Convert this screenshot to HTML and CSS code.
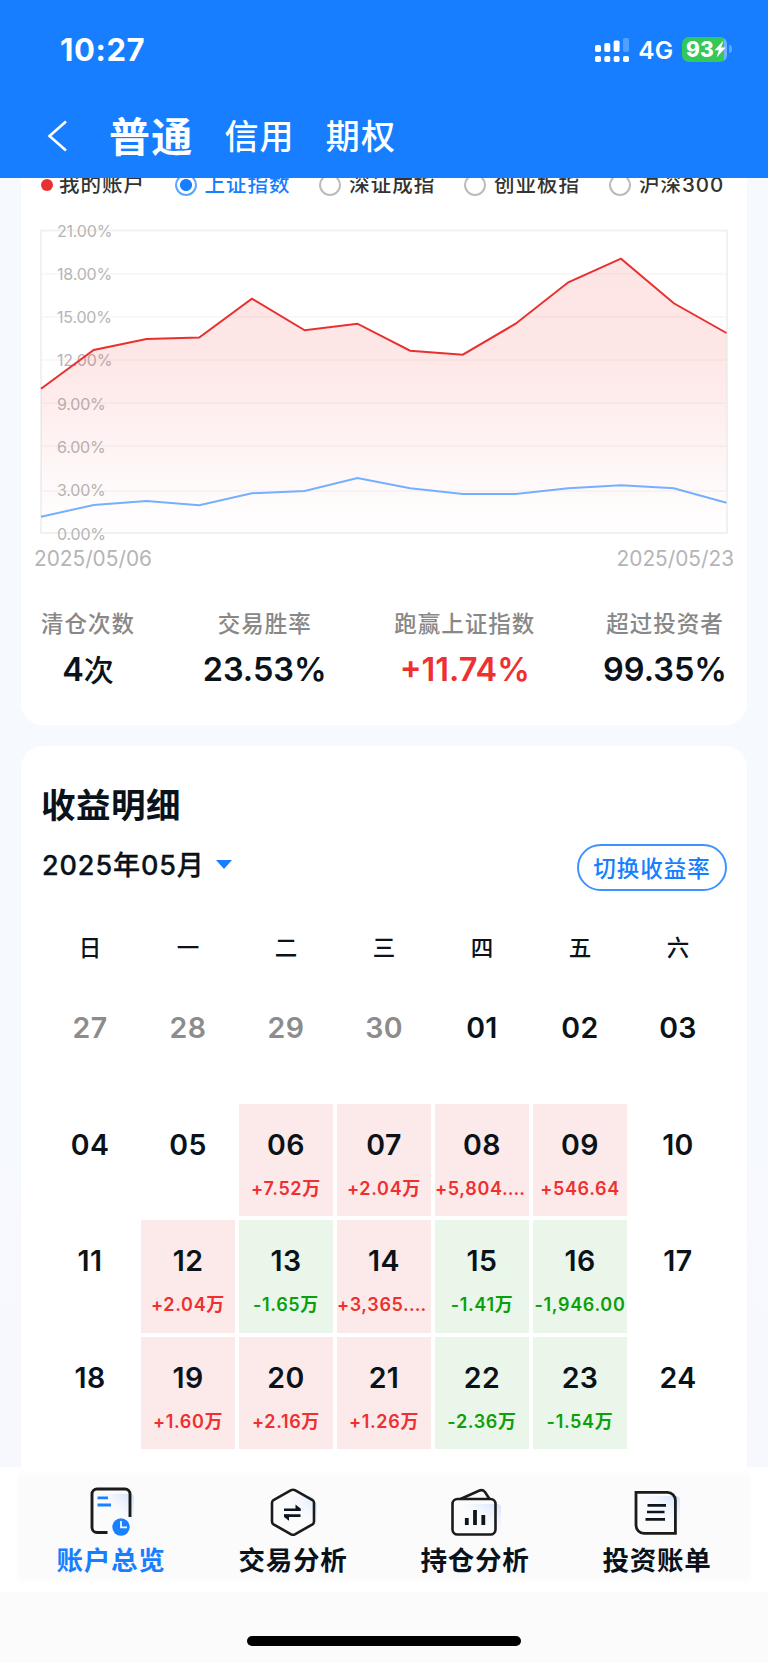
FILE: index.html
```html
<!DOCTYPE html>
<html lang="zh-CN">
<head>
  <meta charset="UTF-8" />
  <title>账户总览</title>
  <link rel="stylesheet" href="styles.css">
</head>
<body>

  <header class="header">
    <div class="status-bar">
      <span class="time">10:27</span>
      <div class="status-icons">
        <svg class="signal" width="34" height="25" viewBox="0 0 34 25" fill="#fff">
          <rect x="0" y="8" width="6" height="7" rx="1.8" />
          <rect x="9.3" y="6" width="6" height="9" rx="1.8" />
          <rect x="18.6" y="3.5" width="6" height="11.5" rx="1.8" />
          <rect x="28" y="1" width="6" height="14" rx="1.8" opacity="0.25" />
          <rect x="0" y="19" width="6" height="6" rx="1.8" />
          <rect x="9.3" y="19" width="6" height="6" rx="1.8" />
          <rect x="18.6" y="19" width="6" height="6" rx="1.8" />
          <rect x="28" y="19" width="6" height="6" rx="1.8" />
        </svg>
        <span class="network">4G</span>
        <div class="battery">
          <span>93</span>
          <svg width="12" height="18" viewBox="0 0 12 18"><path d="M9.5 0.5L0.5 10.2H4.8L2.6 17.5L11.7 7.4H7.2Z" fill="#fff" /></svg>
        </div>
        <i class="battery-cap"></i>
      </div>
    </div>
    <nav class="nav">
      <svg class="back" width="22" height="34" viewBox="0 0 22 34"><path d="M19 2.5L2.5 17L19 31.5" fill="none" stroke="#fff" stroke-width="2.6" /></svg>
      <a class="nav-item active">普通</a>
      <a class="nav-item">信用</a>
      <a class="nav-item">期权</a>
    </nav>
  </header>

  <main class="content">
    <section class="card card-chart">
      <div class="legend">
        <span class="legend-item mine"><i class="dot"></i>我的账户</span>
        <span class="legend-item checked"><i class="radio"></i>上证指数</span>
        <span class="legend-item"><i class="radio"></i>深证成指</span>
        <span class="legend-item"><i class="radio"></i>创业板指</span>
        <span class="legend-item"><i class="radio"></i>沪深300</span>
      </div>

      <svg class="chart" width="688" height="316" viewBox="0 0 688 316">
        <defs>
          <linearGradient id="area" gradientUnits="userSpaceOnUse" x1="0" y1="34" x2="0" y2="309">
            <stop offset="0" stop-color="#f53030" stop-opacity="0.125" />
            <stop offset="0.35" stop-color="#f53030" stop-opacity="0.12" />
            <stop offset="0.85" stop-color="#f53030" stop-opacity="0.025" />
            <stop offset="1" stop-color="#f53030" stop-opacity="0" />
          </linearGradient>
        </defs>
        <g id="grid"></g>
        <path id="fill" fill="url(#area)" />
        <path id="mineLine" class="line line-mine" />
        <path id="indexLine" class="line line-index" />
      </svg>

      <div class="dates"><span>2025/05/06</span><span>2025/05/23</span></div>

      <div class="stats">
        <div class="stat"><p>清仓次数</p><b>4<em>次</em></b></div>
        <div class="stat"><p>交易胜率</p><b>23.53%</b></div>
        <div class="stat"><p>跑赢上证指数</p><b class="up">+11.74%</b></div>
        <div class="stat"><p>超过投资者</p><b>99.35%</b></div>
      </div>
    </section>

    <section class="card card-detail">
      <h2>收益明细</h2>
      <div class="toolbar">
        <div class="month">2025年05月<i class="caret"></i></div>
        <button class="btn-switch">切换收益率</button>
      </div>
      <div class="week">
        <span>日</span><span>一</span><span>二</span><span>三</span><span>四</span><span>五</span><span>六</span>
      </div>
      <div class="calendar" id="calendar"></div>
    </section>
  </main>

  <footer class="tabbar">
    <div class="tabs">
      <a class="tab active">
        <svg width="52" height="52" viewBox="0 0 52 52" fill="none">
          <defs>
            <linearGradient id="tint" x1="0" y1="1" x2="1" y2="0">
              <stop offset="0.3" stop-color="#fff" stop-opacity="0" />
              <stop offset="1" stop-color="#cfe0ff" />
            </linearGradient>
          </defs>
          <rect x="12" y="8" width="37" height="32" rx="4" fill="url(#tint)" />
          <path d="M22.5 46.5H12a5 5 0 0 1-5-5V8a5 5 0 0 1 5-5H40a5 5 0 0 1 5 5V31" stroke="#1b1b1b" stroke-width="2.9" />
          <path d="M12.5 11.9H23M12.5 19H26" stroke="#1a80ff" stroke-width="2.8" />
          <circle cx="36" cy="41" r="8.7" fill="#1a80ff" />
          <path d="M36 35V41.4H42" stroke="#fff" stroke-width="1.7" />
        </svg>
        <span>账户总览</span>
      </a>
      <a class="tab">
        <svg width="52" height="52" viewBox="0 0 52 52" fill="none">
          <path d="M24 12L44 10L50 18V38L30 44Z" fill="url(#tint)" />
          <path d="M24.1 4.2Q26 3.2 27.9 4.2L45.5 14Q47 15 47 16.8V35.6Q47 37.4 45.5 38.3L27.9 48.3Q26 49.2 24.1 48.3L6.5 38.3Q5 37.4 5 35.6V16.8Q5 15 6.5 14Z" stroke="#1b1b1b" stroke-width="2.6" />
          <path d="M17 23.8H33.5M17 29.6H33.5" stroke="#0d1620" stroke-width="2.6" />
          <path d="M28.5 18.6L33.5 22.5V25H28.5ZM22 34.8L17 31V28.5H22Z" fill="#0d1620" />
        </svg>
        <span>交易分析</span>
      </a>
      <a class="tab">
        <svg width="52" height="52" viewBox="0 0 52 52" fill="none">
          <rect x="12" y="18" width="40" height="27" rx="4" fill="url(#tint)" />
          <rect x="3.5" y="13" width="43" height="35.5" rx="5" stroke="#1b1b1b" stroke-width="2.6" />
          <path d="M11.5 13L30 4.7Q33.5 3.2 36 6L40.5 13" stroke="#1b1b1b" stroke-width="2.6" />
          <path d="M17.8 32V39M26 24V39M34.3 29V39" stroke="#0d1620" stroke-width="3.8" />
        </svg>
        <span>持仓分析</span>
      </a>
      <a class="tab">
        <svg width="52" height="52" viewBox="0 0 52 52" fill="none">
          <rect x="12" y="10" width="37" height="32" rx="4" fill="url(#tint)" />
          <path d="M5 6.3H36.4a8 8 0 0 1 8 8V47.3H13a8 8 0 0 1-8-8Z" stroke="#1b1b1b" stroke-width="2.8" />
          <path d="M16.5 19.3H35M16 26H33.5M14.5 33.3H34" stroke="#0d1620" stroke-width="2.7" />
        </svg>
        <span>投资账单</span>
      </a>
    </div>
  </footer>
  <div class="home"><i></i></div>

  <script>
    // y positions of the axis lines and both series, in chart pixels
    const gridLines = [[6.5, '21.00%'], [50, '18.00%'], [93, '15.00%'], [136, '12.00%'], [179, '9.00%'], [222, '6.00%'], [267, '3.00%'], [309, '0.00%']];
    const mine = [164.7, 126, 115, 113.5, 74.7, 106.3, 99.7, 126.7, 130.7, 99.7, 58.3, 34.7, 79.3, 109];
    const index = [292.7, 281, 277, 281.3, 269.3, 267, 254, 264.3, 270, 270, 264.3, 261.3, 264.3, 278.7];

    let html = '';
    gridLines.forEach(([y, label], i) => {
      if (i > 0 && i < 7) html += `<path class="grid-line" d="M1 ${y}H686" />`;
    });
    html += '<rect class="grid-frame" x="1" y="6.5" width="686" height="302.5" />';
    gridLines.forEach(([y, label], i) => {
      html += `<text x="17" y="${6.5 + i * 43.3 + 6}">${label}</text>`;
    });
    document.getElementById('grid').innerHTML = html;

    const toPath = (arr) => 'M' + arr.map((y, i) => `${(1 + i * 685.5 / 13).toFixed(1)} ${y}`).join('L');
    document.getElementById('mineLine').setAttribute('d', toPath(mine));
    document.getElementById('indexLine').setAttribute('d', toPath(index));
    document.getElementById('fill').setAttribute('d', toPath(mine) + 'V309H1Z');

    const profits = {
      '06': '+7.52万', '07': '+2.04万', '08': '+5,804.00', '09': '+546.64',
      '12': '+2.04万', '13': '-1.65万', '14': '+3,365.00', '15': '-1.41万', '16': '-1,946.00',
      '19': '+1.60万', '20': '+2.16万', '21': '+1.26万', '22': '-2.36万', '23': '-1.54万'
    };
    const calendar = document.getElementById('calendar');

    // 27 - 30 belong to April
    for (let i = -3; i <= 24; i++) {
      const day = String(i <= 0 ? 30 + i : i).padStart(2, '0');
      const profit = i > 0 ? profits[day] : '';
      const cell = document.createElement('div');
      cell.classList.add('cell');
      if (i <= 0) cell.classList.add('other');
      if (profit) cell.classList.add(profit[0] === '+' ? 'gain' : 'loss');
      cell.innerHTML = `<b>${day}</b>` + (profit ? `<span>${profit}</span>` : '');
      calendar.appendChild(cell);
    }
  </script>
</body>
</html>
```
FILE: styles.css
```css
* {
  box-sizing: border-box;
}

body {
  margin: 0;
  width: 768px;
  height: 1663px;
  display: flex;
  flex-direction: column;
  overflow: hidden;
  font-family: Inter, "Noto Sans CJK SC", sans-serif;
  color: #0a121a;
  background: #fff;
}

i,
em {
  font-style: normal;
}

/* Header */
.header {
  flex: none;
  height: 178px;
  background: #177fff;
  color: #fff;
}

.status-bar {
  height: 98px;
  padding: 0 36px 0 60px;
  display: flex;
  justify-content: space-between;
  align-items: center;
}

.time {
  font-size: 31px;
  font-weight: 700;
  letter-spacing: 0.6px;
}

.status-icons {
  display: flex;
  align-items: center;
}

.network {
  margin: 2px 9px 0 9px;
  font-size: 24.5px;
  font-weight: 600;
}

.battery {
  width: 45px;
  height: 25px;
  border-radius: 7px;
  background: linear-gradient(90deg, #34c759 42px, #74b3ff 42px);
  display: flex;
  align-items: center;
  padding-left: 4px;
  font-size: 21px;
  font-weight: 800;
}

.battery-cap {
  width: 3px;
  height: 8px;
  margin-left: 2px;
  border-radius: 0 4px 4px 0;
  background: #5ba5ff;
}

.nav {
  height: 76px;
  display: flex;
  align-items: center;
  padding-left: 47px;
}

.back {
  margin-right: 40px;
}

.nav-item {
  font-size: 34px;
  font-weight: 500;
  letter-spacing: 1.2px;
  margin: -4px 31px 0 0;
}

.nav-item.active {
  font-size: 41px;
  font-weight: 700;
}

/* Content */
.content {
  flex: none;
  height: 1289px;
  overflow: hidden;
  padding: 0 21px;
  display: flex;
  flex-direction: column;
  gap: 21px;
  background: linear-gradient(#f6faff 50%, #f6f8fe);
}

.card {
  flex: none;
  background: #fff;
  border-radius: 22px;
}

.card-chart {
  height: 547px;
  border-radius: 0 0 22px 22px;
}

.legend {
  display: flex;
  height: 30px;
  margin-top: -8px;
  padding-left: 20px;
}

.legend-item {
  flex: none;
  display: flex;
  align-items: center;
  width: 144.8px;
  font-size: 20.5px;
  font-weight: 500;
  letter-spacing: 1px;
  line-height: 30px;
  color: #333;
  white-space: nowrap;
}

.legend-item:last-child {
  width: auto;
}

.legend-item.mine {
  width: 133.5px;
}

.dot {
  width: 12px;
  height: 12px;
  margin-right: 6px;
  border-radius: 50%;
  background: #e93030;
}

.radio {
  width: 22px;
  height: 22px;
  margin-right: 8px;
  border: 2px solid #bbb;
  border-radius: 50%;
}

.checked {
  color: #177fff;
}

.checked .radio {
  border-color: #5ba5ff;
  background: radial-gradient(circle, #177fff 5.6px, #fff 6.4px);
}

.chart {
  display: block;
  margin: 24px 0 0 19px;
}

.chart text {
  font-size: 16px;
  font-weight: 400;
  letter-spacing: -0.2px;
  fill: #b5b5b5;
}

.grid-line {
  stroke: #f6f6f6;
  stroke-width: 1.5;
}

.grid-frame {
  fill: none;
  stroke: #f1f1f1;
  stroke-width: 2;
}

.line {
  fill: none;
  stroke-width: 2;
}

.line-mine {
  stroke: #e93030;
}

.line-index {
  stroke: #74b0ff;
}

.dates {
  display: flex;
  justify-content: space-between;
  padding: 1px 13px 0;
  font-size: 20.8px;
  line-height: 36px;
  color: #b5b5b5;
}

.stats {
  display: flex;
  justify-content: space-between;
  margin: 31px 20px 0 20px;
}

.stat {
  text-align: center;
}

.stat p {
  margin: 0;
  font-size: 22.5px;
  font-weight: 500;
  line-height: 32px;
  letter-spacing: 1px;
  color: #888;
}

.stat b {
  display: block;
  font-size: 32.5px;
  font-weight: 600;
  line-height: 46px;
  margin-top: 7px;
}

.stat em {
  font-size: 30px;
  font-weight: 500;
}

.stat .up {
  color: #ee3030;
}

/* Profit calendar */
.card-detail {
  height: 760px;
  padding: 36px 20px 0 20px;
}

.card-detail h2 {
  margin: 0;
  font-size: 34.5px;
  font-weight: 700;
  line-height: 48px;
  letter-spacing: 0.5px;
}

.toolbar {
  display: flex;
  justify-content: space-between;
  margin-top: 14px;
}

.month {
  display: flex;
  align-items: center;
  height: 39px;
  padding-left: 1px;
  font-size: 27px;
  font-weight: 500;
  letter-spacing: 0.9px;
  -webkit-text-stroke: 0.3px;
}

.caret {
  margin: 1px 0 0 11px;
  border: 8px solid transparent;
  border-top: 9px solid #177fff;
  border-bottom: 0;
}

.btn-switch {
  width: 150px;
  height: 47px;
  padding: 0 0 2px;
  border: 2px solid #3e94ff;
  border-radius: 24px;
  background: #fff;
  color: #177fff;
  font-family: inherit;
  font-size: 22.5px;
  font-weight: 500;
  letter-spacing: 1px;
}

.week,
.calendar {
  display: grid;
  grid-template-columns: repeat(7, 94px);
  column-gap: 4px;
  margin-left: 2px;
}

.week {
  height: 93px;
  align-items: center;
  text-align: center;
  font-size: 22.5px;
  font-weight: 500;
  margin-top: 8px;
}

.calendar {
  margin-top: -5px;
  grid-auto-rows: 112.6px;
  row-gap: 4px;
}

.cell {
  padding-top: 24px;
  text-align: center;
  overflow: hidden;
}

.cell b {
  display: block;
  font-size: 28.5px;
  line-height: 34px;
  font-weight: 600;
  letter-spacing: 0.4px;
}

.cell span {
  display: block;
  margin-top: 14px;
  font-size: 18px;
  line-height: 26px;
  font-weight: 600;
  letter-spacing: 0.65px;
  white-space: nowrap;
  overflow: hidden;
  text-overflow: ellipsis;
}

.other {
  color: #8c8c8c;
}

.gain {
  background: #fce9e9;
}

.gain span {
  color: #ee3030;
}

.loss {
  background: #eaf6ea;
}

.loss span {
  color: #0c9f0c;
}

/* Bottom tabs */
.tabbar {
  flex: none;
  height: 125px;
  padding: 8px 20px 13px;
  background: #fff;
}

.tabs {
  height: 104px;
  display: flex;
  background: #fbfbfb;
  box-shadow: 0 0 4px 2px #fbfbfb;
}

.tab {
  flex: 1;
  display: flex;
  flex-direction: column;
  align-items: center;
  padding-top: 11px;
  font-size: 26.5px;
  font-weight: 700;
  letter-spacing: 0.8px;
}

.tab svg {
  flex: none;
}

.tab span {
  margin-top: 3px;
  line-height: 38px;
}

.tab.active {
  color: #177fff;
}

.home {
  flex: none;
  height: 71px;
  padding-top: 44px;
  background: #fbfbfb;
}

.home i {
  display: block;
  width: 274px;
  height: 10px;
  margin: 0 auto;
  border-radius: 5px;
  background: #000;
}
```
